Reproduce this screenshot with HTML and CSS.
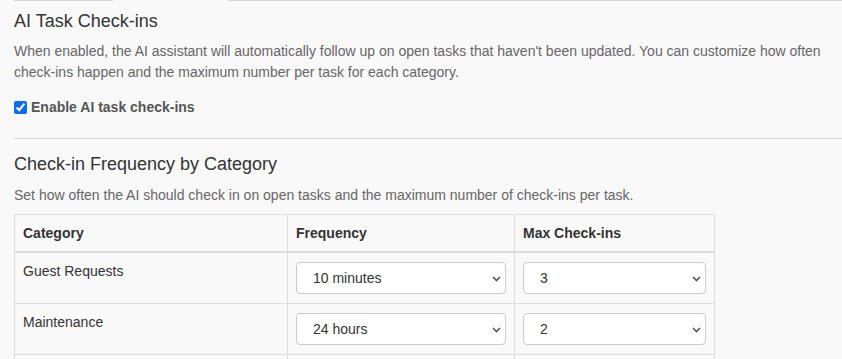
FILE: index.html
```html
<!DOCTYPE html>
<html lang="en">
<head>
<meta charset="UTF-8" />
<meta name="viewport" content="width=device-width, initial-scale=1.0"/>
<title>AI Task Check-ins</title>
<link rel="stylesheet" href="styles.css">
</head>
<body>

<div class="top-rule">
  <span class="seg seg-a"></span>
  <span class="seg-gap"></span>
  <span class="seg seg-b"></span>
</div>

<section class="settings">
  <h2 class="settings-title">AI Task Check-ins</h2>
  <p class="help">When enabled, the AI assistant will automatically follow up on open tasks that haven't been updated. You can customize how often check-ins happen and the maximum number per task for each category.</p>

  <label class="toggle">
    <input type="checkbox" id="checkinsEnabled" checked />
    <span>Enable AI task check-ins</span>
  </label>

  <hr class="divider" />

  <h3 class="section-title">Check-in Frequency by Category</h3>
  <p class="help">Set how often the AI should check in on open tasks and the maximum number of check-ins per task.</p>

  <table class="freq-table">
    <colgroup>
      <col class="col-cat" />
      <col class="col-freq" />
      <col class="col-max" />
    </colgroup>
    <thead>
      <tr>
        <th>Category</th>
        <th>Frequency</th>
        <th>Max Check-ins</th>
      </tr>
    </thead>
    <tbody>
      <tr>
        <td>Guest Requests</td>
        <td>
          <div class="select-wrap">
            <select>
              <option>5 minutes</option>
              <option selected>10 minutes</option>
              <option>30 minutes</option>
              <option>1 hour</option>
              <option>24 hours</option>
            </select>
            <svg class="chev" width="9" height="6" viewBox="0 0 9 6"><path d="M1 1l3.5 3.5L8 1" fill="none" stroke="#555" stroke-width="1.6"/></svg>
          </div>
        </td>
        <td>
          <div class="select-wrap">
            <select>
              <option>1</option>
              <option>2</option>
              <option selected>3</option>
              <option>5</option>
            </select>
            <svg class="chev" width="9" height="6" viewBox="0 0 9 6"><path d="M1 1l3.5 3.5L8 1" fill="none" stroke="#555" stroke-width="1.6"/></svg>
          </div>
        </td>
      </tr>
      <tr>
        <td>Maintenance</td>
        <td>
          <div class="select-wrap">
            <select>
              <option>10 minutes</option>
              <option>1 hour</option>
              <option selected>24 hours</option>
            </select>
            <svg class="chev" width="9" height="6" viewBox="0 0 9 6"><path d="M1 1l3.5 3.5L8 1" fill="none" stroke="#555" stroke-width="1.6"/></svg>
          </div>
        </td>
        <td>
          <div class="select-wrap">
            <select>
              <option>1</option>
              <option selected>2</option>
              <option>3</option>
            </select>
            <svg class="chev" width="9" height="6" viewBox="0 0 9 6"><path d="M1 1l3.5 3.5L8 1" fill="none" stroke="#555" stroke-width="1.6"/></svg>
          </div>
        </td>
      </tr>
      <tr class="row-next">
        <td></td>
        <td></td>
        <td></td>
      </tr>
    </tbody>
  </table>
</section>

</body>
</html>
```

FILE: styles.css
```css
html, body {
  margin: 0;
  height: 100%;
  overflow: hidden;
}
body {
  font-family: "Liberation Sans", Arial, sans-serif;
  background-color: #f9f9f9;
  color: #333;
}
.top-rule {
  display: flex;
  height: 1px;
}
.seg {
  background-color: #d6d6d6;
}
.seg-a {
  width: 99px;
  margin-left: 14px;
}
.seg-gap {
  width: 115px;
}
.seg-b {
  flex: 1;
}
.settings {
  padding-left: 14px;
}
.settings-title {
  margin: 9px 0 0;
  font-size: 18px;
  line-height: 22px;
  font-weight: normal;
  color: #333;
}
.help {
  margin: 9px 0 0;
  font-size: 14px;
  line-height: 21px;
  color: #666;
}
.toggle {
  display: flex;
  align-items: center;
  gap: 4px;
  margin-top: 14px;
  height: 20px;
  font-size: 14px;
  font-weight: bold;
  color: #555;
}
.toggle input {
  margin: 0;
  width: 13px;
  height: 13px;
  accent-color: #0a6cf5;
}
.divider {
  margin: 21px 0 0;
  border: 0;
  border-top: 1px solid #d6d6d6;
  height: 0;
}
.section-title {
  margin: 14px 0 0;
  font-size: 18px;
  line-height: 22px;
  font-weight: normal;
  color: #333;
}
.section-title + .help {
  margin-top: 10px;
}
.freq-table {
  margin-top: 8px;
  width: 700px;
  table-layout: fixed;
  border-collapse: collapse;
  font-size: 14px;
  line-height: 19px;
}
.col-cat { width: 273px; }
.col-freq { width: 227px; }
.col-max { width: 200px; }
.freq-table th,
.freq-table td {
  border: 1px solid #ddd;
  text-align: left;
  vertical-align: top;
  color: #333;
}
.freq-table th {
  padding: 9px 8px 8px;
  font-weight: bold;
  border-bottom: 2px solid #ddd;
}
.freq-table td {
  padding: 9px 8px;
}
.row-next td {
  height: 32px;
}
.select-wrap {
  position: relative;
}
.select-wrap select {
  appearance: none;
  -webkit-appearance: none;
  display: block;
  width: 100%;
  height: 32px;
  margin: 0;
  padding: 0 16px;
  border: 1px solid #ccc;
  border-radius: 4px;
  background-color: #fff;
  font-family: inherit;
  font-size: 14px;
  color: #333;
}
.chev {
  position: absolute;
  right: 5px;
  top: 14px;
  pointer-events: none;
}
```
